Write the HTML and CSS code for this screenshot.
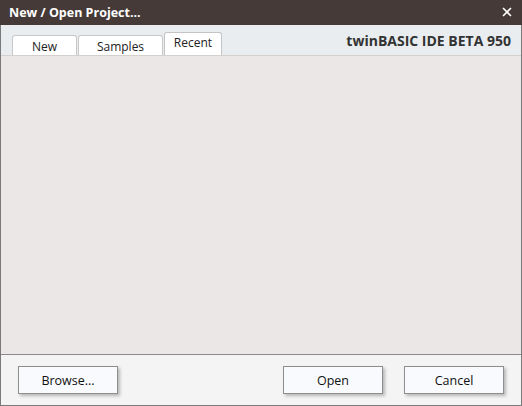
FILE: index.html
```html
<!DOCTYPE html>
<html lang="en">
    <head>
        <meta charset="UTF-8" />
        <title>New / Open Project...</title>
        <link rel="stylesheet" href="styles.css">
    </head>
    <body>
        <div class="window">
            <div class="titlebar">
                <span class="title">New / Open Project...</span>
                <span class="close">
                    <svg width="10" height="10" viewBox="0 0 10 10">
                        <path d="M1 1 L9 9 M9 1 L1 9" stroke="#fff" stroke-width="1.6" />
                    </svg>
                </span>
            </div>
            <div class="tabbar">
                <div class="tabs">
                    <div class="tab">New</div>
                    <div class="tab">Samples</div>
                    <div class="tab active">Recent</div>
                </div>
                <div class="brand">twinBASIC IDE BETA 950</div>
            </div>
            <div class="content"></div>
            <div class="footer">
                <button class="btn">Browse...</button>
                <div class="spacer"></div>
                <button class="btn">Open</button>
                <button class="btn">Cancel</button>
            </div>
        </div>
    </body>
</html>
```

FILE: styles.css
```css
* {
    margin: 0;
    padding: 0;
    box-sizing: border-box;
}
body {
    font-family: "Open Sans", "Noto Sans", sans-serif;
    width: 522px;
    height: 406px;
    overflow: hidden;
    color: #222;
}
.window {
    width: 522px;
    height: 406px;
    display: flex;
    flex-direction: column;
    border: 1px solid #7a7a7a;
    border-top: none;
}
.titlebar {
    height: 25px;
    background-color: #453a38;
    display: flex;
    align-items: center;
    justify-content: space-between;
    padding: 0 10px 0 9px;
    margin: 0 -1px;
}
.title {
    color: #fff;
    font-weight: 700;
    font-size: 12.5px;
}
.close {
    display: flex;
    margin-top: -1px;
}
.tabbar {
    height: 31px;
    background-color: #e9edf0;
    display: flex;
    align-items: flex-end;
    justify-content: space-between;
    padding: 0 10px 0 11px;
    border-bottom: 1px solid #d4d0ce;
}
.tabs {
    display: flex;
    align-items: flex-end;
    gap: 1px;
}
.tab {
    background-color: #fff;
    border: 1px solid #c8c8c8;
    border-bottom: none;
    border-radius: 3px 3px 0 0;
    height: 20px;
    font-size: 12px;
    line-height: 22px;
    text-align: center;
    width: 65px;
}
.tab:nth-child(2) {
    width: 85px;
}
.tab.active {
    height: 23px;
    width: 58px;
    line-height: 20px;
    border-color: #c4c4c4;
}
.brand {
    font-weight: 700;
    font-size: 14px;
    color: #333;
    align-self: center;
    margin-top: 1px;
}
.content {
    flex: 1;
    background-color: #ebe7e6;
    border-bottom: 1px solid #8a8a8a;
}
.footer {
    height: 50px;
    background-color: #f4f4f4;
    display: flex;
    align-items: center;
    padding: 0 17px 0 17px;
    gap: 21px;
}
.spacer {
    flex: 1;
}
.btn {
    width: 100px;
    height: 28px;
    font-family: inherit;
    font-size: 12.5px;
    color: #111;
    background-color: #f8fafd;
    border: 1px solid #8e8e8e;
    box-shadow: 2px 2px 3px rgba(0, 0, 0, 0.25);
}
```
